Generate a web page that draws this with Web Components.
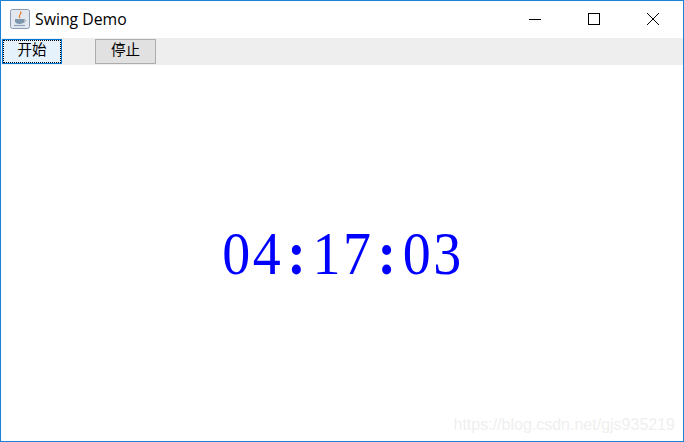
<!DOCTYPE html>
<html>
<head>
<meta charset="utf-8">
<title>Swing Demo</title>
<style>
  html, body { margin: 0; height: 100%; }
  body { font-family: "Liberation Sans", "Noto Sans CJK SC", sans-serif; }
</style>
</head>
<body>
<swing-window title-text="Swing Demo">
  <swing-button slot="toolbar" focused>开始</swing-button>
  <swing-button slot="toolbar">停止</swing-button>
  <clock-label>04:17:03</clock-label>
</swing-window>

<script>
class SwingWindow extends HTMLElement {
  constructor() {
    super();
    const shadowRoot = this.attachShadow({ mode: 'open' });
    shadowRoot.innerHTML = `
      <style>
        :host {
          display: flex;
          flex-direction: column;
          box-sizing: border-box;
          width: 684px;
          height: 442px;
          position: relative;
          background: #fff;
          border: 1px solid #1883d7;
          overflow: hidden;
        }
        .titlebar {
          display: flex;
          align-items: center;
          height: 37px;
          flex: none;
        }
        .icon { width: 20px; height: 20px; margin-left: 9px; margin-top: -2px; flex: none; }
        .title {
          margin-left: 5px;
          margin-top: -2px;
          flex: 1;
          font: 15.800px "Open Sans", "Liberation Sans", sans-serif;
          color: #000;
        }
        .ctrl {
          width: 59px;
          height: 37px;
          display: flex;
          align-items: center;
          justify-content: center;
        }
        .ctrl svg { width: 12px; height: 12px; display: block; margin-top: -2px; }
        .controls { display: flex; margin-right: 1px; }
        .toolbar {
          display: flex;
          gap: 33px;
          align-items: flex-start;
          height: 27px;
          padding: 1px 0 0 1px;
          box-sizing: border-box;
          background: #eeeeee;
          flex: none;
        }
        .content {
          flex: 1;
          display: flex;
          align-items: center;
          justify-content: center;
        }
        .mark {
          position: absolute;
          right: 8px;
          bottom: 7px;
          font: 16px "Liberation Sans", sans-serif;
          color: #efefef;
        }
      </style>
      <div class="titlebar">
        <svg class="icon" viewBox="0 0 20 20">
          <rect x="0.5" y="0.5" width="19" height="19" rx="2" fill="#e3e8f0" stroke="#8a9cb4"/>
          <path d="M10.500 2.500c2 2-2.500 3-.5 6.500-2.500-2.500 2.500-3.500.5-6.500z" fill="#e2761c" stroke="#e2761c" stroke-width=".8"/>
          <path d="M5 10h9v2.500c0 1.500-2 2.500-4.500 2.500S5 14 5 12.500z" fill="#7f97ad"/>
          <path d="M14 10.500c2 0 2 2.500-1 3" fill="none" stroke="#7f97ad"/>
          <path d="M4 16.500h11" stroke="#8fa4b8" stroke-width="1.200"/>
        </svg>
        <span class="title">${this.getAttribute('title-text')}</span>
        <div class="controls">
          <div class="ctrl"><svg viewBox="0 0 12 12"><path d="M0 6.500h12" stroke="#000" fill="none"/></svg></div>
          <div class="ctrl"><svg viewBox="0 0 12 12"><rect x=".5" y=".5" width="11" height="11" stroke="#000" fill="none"/></svg></div>
          <div class="ctrl"><svg viewBox="0 0 12 12"><path d="M0 0l12 12M12 0L0 12" stroke="#000" fill="none"/></svg></div>
        </div>
      </div>
      <div class="toolbar"><slot name="toolbar"></slot></div>
      <div class="content"><slot></slot></div>
      <div class="mark">https://blog.csdn.net/gjs935219</div>
    `;
  }
}

class SwingButton extends HTMLElement {
  constructor() {
    super();
    const shadowRoot = this.attachShadow({ mode: 'open' });
    shadowRoot.innerHTML = `
      <style>
        :host {
          display: block;
          box-sizing: border-box;
          width: 61px;
          height: 25px;
          border: 1px solid #adadad;
          background: #e1e1e1;
          color: #000;
          font: 14.500px "Noto Sans CJK SC", sans-serif;
        }
        :host([focused]) {
          width: 60px;
          border-color: #0078d7;
          background: #e5f1fb;
        }
        .face {
          box-sizing: border-box;
          height: 100%;
          padding-bottom: 5px;
          display: flex;
          align-items: center;
          justify-content: center;
          line-height: 1;
        }
        .outline { height: 100%; }
        :host([focused]) .outline { outline: 1px dotted #000; outline-offset: -1px; }
      </style>
      <div class="outline"><div class="face"><slot></slot></div></div>
    `;
  }
}

class ClockLabel extends HTMLElement {
  connectedCallback() {
    const shadowRoot = this.attachShadow({ mode: 'open' });
    const parts = this.textContent.split(':').join('<span class="sep">:</span>');
    shadowRoot.innerHTML = `
      <style>
        :host {
          display: block;
          font: 56px "Liberation Serif", serif;
          letter-spacing: 2.500px;
          color: #0000ff;
          line-height: 1;
          padding-left: 2px;
          transform: scaleY(1.080);
        }
        .sep { margin: 0 4px; font-weight: bold; }
      </style>
      ${parts}
    `;
  }
}

customElements.define('swing-window', SwingWindow);
customElements.define('swing-button', SwingButton);
customElements.define('clock-label', ClockLabel);
</script>
</body>
</html>
